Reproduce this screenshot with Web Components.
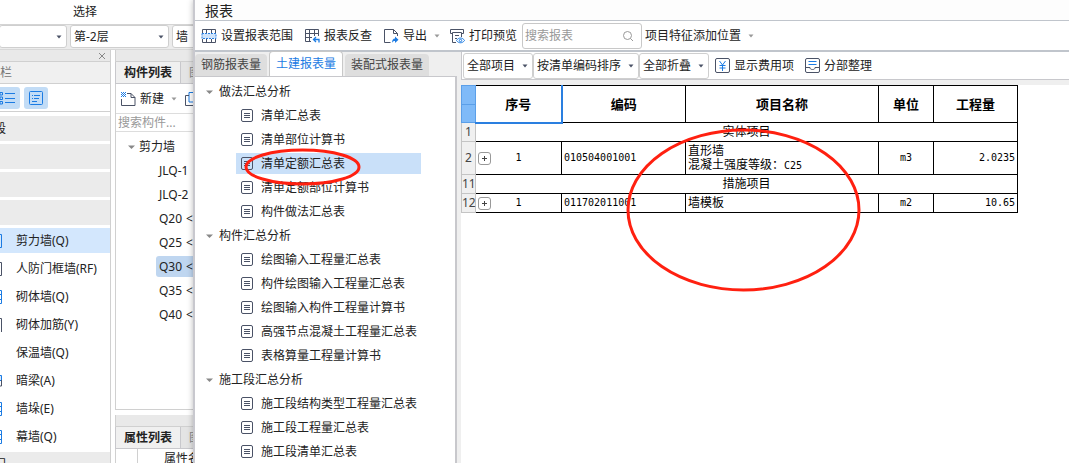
<!DOCTYPE html>
<html lang="zh-CN">
<head>
<meta charset="utf-8">
<title>报表</title>
<style>
html,body{height:100%;margin:0}
body{font:12px/16px "Noto Sans","Noto Sans CJK SC",sans-serif;color:#222;background:#fff;overflow:hidden}
</style>
</head>
<body>
<report-app></report-app>
<script>
const BASE = `*{box-sizing:border-box}button,input,select{font:inherit;color:inherit;margin:0}button{border:0;background:none;padding:0;white-space:nowrap}svg{display:block;flex:none}`;
function define(name, css, html) {
  customElements.define(name, class extends HTMLElement {
    connectedCallback() {
      if (this.shadowRoot) return;
      const body = typeof html === 'function' ? html(this) : html;
      this.attachShadow({mode: 'open'}).innerHTML = `<style>${BASE}${css}</style>${body}`;
    }
  });
}

const ICONS = {
  range: `<path d="M1.500 5V1.500h13V5M1.500 11v3.500h13V11M5.500 1.500V5M10.500 1.500V5M5.500 11v3.500M10.500 11v3.500" stroke="#4a5266"/><path d="M1 5.500h14v5H1z" fill="#cfe4fb" stroke="#2a7fe0" stroke-dasharray="2 1"/>`,
  check: `<path d="M7 13.500H1.500v-12h13V8M1.500 5.500h13M1.500 9.500H8M5.500 1.500v12M10.500 1.500V8" stroke="#4a5266"/><path d="M15 14.500v-3H9.500M12 9l-2.500 2.500L12 14" stroke="#1b7be3" stroke-width="1.300"/>`,
  export: `<path d="M7.500 14.500h-6v-13h9l4 4V8M10.500 1.500v4h4" stroke="#4a5266"/><path d="M9 15c0-3 1-4.500 3-4.500V8.500l3.500 3.200L12 15v-2c-1.500 0-2.300.500-3 2z" fill="#1b7be3"/>`,
  print: `<path d="M3.500 5.500h-2v-4h13v4h-2M3.500 4.500v10H7M3.500 4.500h9V9M6 7.500h4M6 10.500h2" stroke="#4a5266"/><path d="M7.500 12.500c2-3.300 6-3.300 8 0-2 3-6 3-8 0z" fill="#fff" stroke="#1b7be3"/><circle cx="11.500" cy="12.500" r="1.200" stroke="#1b7be3"/>`,
  search: `<circle cx="7.500" cy="7.500" r="4" stroke="#999"/><path d="M10.500 10.500 13 13" stroke="#999"/>`,
  fee: `<rect x=".5" y=".5" width="14" height="14" rx="1.500" stroke="#4a5266"/><path d="M4.500 3l3 4 3-4M7.500 7v6M4.500 7.500h6M4.500 10h6" stroke="#1b7be3"/>`,
  sort: `<rect x=".5" y=".5" width="14" height="14" rx="1.500" stroke="#4a5266"/><path d="M3.500 3.500h8M3.500 6.500h8" stroke="#1b7be3"/><path d="M.5 9.500H5c0 1.500 1 2 2.500 2s2.500-.5 2.500-2h4.500" stroke="#4a5266"/>`,
  doc: `<rect x="1.500" y="1.500" width="11" height="12" rx="1.500" stroke="#4a5266"/><path d="M4 5.500h6M4 7.500h6M4 9.500h6" stroke="#4a5266"/>`,
  fresh: `<path d="M7 2.500h4l4 4v8H1.500V8M11 2.500v4h4" stroke="#4a5266"/><path d="M1 1.500h5M1 3.500h5M1 5.500h5M2 2.500h4M2 4.500h4" stroke="#1b7be3" stroke-dasharray="1 1"/>`,
  copy: `<path d="M5 1.500h9.500v9.500H5z" stroke="#1b7be3"/><path d="M5 4.500H1.500v10h9V11" stroke="#4a5266"/>`,
  close: `<path d="M5 5l6 6M11 5l-6 6" stroke="#888"/>`,
  list: `<path d="M0 2.500h2.500v2.500H0zM0 7h2.500v2.500H0zM0 11.500h2.500V14H0zM5 3.500h10M5 8.500h10M5 12.500h10" stroke="#1b7be3"/>`,
  card: `<rect x="1.500" y="1.500" width="13" height="13" rx="1" stroke="#1b7be3"/><path d="M4 5.500h1M6 5.500h6M4 8.500h1M6 8.500h5M4 11.500h5" stroke="#1b7be3"/>`,
  down: `<path d="M5.500 6.500h5L8 9.500z" fill="#4a5266"/>`,
  fold: `<path d="M5 6.500h7L8.500 10z" fill="#888"/>`,
  more: `<path d="M5.500 6.500h5L8 9.500z" fill="#999"/>`
};
define('ui-icon', `:host{display:block;flex:none}`, el => {
  const s = el.getAttribute('size') || 16;
  return `<svg width="${s}" height="${s}" viewBox="0 0 ${s} ${s}" fill="none" aria-hidden="true">${ICONS[el.getAttribute('name')]}</svg>`;
});
define('tool-button', `:host{display:block;flex:none}button{display:flex;align-items:center;gap:4px;height:24px}`,
  el => `<button type="button"><ui-icon name="${el.getAttribute('icon')}" size="${el.getAttribute('size') || 16}"></ui-icon><slot></slot></button>`);
define('drop-select', `:host{display:grid;flex:none;height:26px}
  select,ui-icon{grid-area:1/1}select{appearance:none;width:100%;height:100%;border:1px solid #cfcfcf;border-radius:3px;background:#fff;padding:0 16px 0 3px;outline:0}
  :host([plain]) select{border-color:transparent;background:none;padding-left:2px}
  ui-icon{justify-self:end;align-self:center;pointer-events:none}`,
  el => `<select aria-label="${el.getAttribute('label')}"><option>${el.getAttribute('value')}</option></select><ui-icon name="${el.hasAttribute('plain') ? 'more' : 'down'}"></ui-icon>`);

/* main window behind the report */
define('floor-bar', `:host{display:block}
  header{height:24px;padding:4px 0 0 73px}
  .bar{display:flex;gap:3px;height:26px;background:#ececec;border-top:1px solid #d4d4d4;border-bottom:1px solid #d8d8d8}
  drop-select{height:23px}.a{width:68px;margin-left:-1px}.b{width:99px}.c{width:90px}`,
  `<header>选择</header><div class="bar"><drop-select class="a" label="工程" value=""></drop-select><drop-select class="b" label="楼层" value="第-2层"></drop-select><drop-select class="c" label="类型" value="墙"></drop-select></div>`);

const wallIcon = k => ({
  q: '<path d="M0 1.500h1.500v13H0" stroke="#1b7be3" fill="#d5e8fc"/>',
  d: '<path d="M0 1.500h1.500v13H0" stroke="#4a5266"/>',
  g: '<path d="M0 1.500h1.500v13H0M0 5.500h2M0 10.500h2" stroke="#1b7be3"/>',
  h: '<path d="M0 1.500h1.500V15" stroke="#4a5266"/>',
  n: '',
  s: '<path d="M0 2.500h1.500v5H0" stroke="#1b7be3" fill="#d5e8fc"/><path d="M1.500 7v6H0" stroke="#4a5266"/>'
}[k]);
define('side-item', `:host{display:block}button{display:flex;align-items:center;gap:13px;width:100%;height:25px}
  :host([selected]) button{background:#d3e7fd}`,
  el => `<button type="button"><svg width="3" height="16" viewBox="0 0 3 16" fill="none">${wallIcon(el.getAttribute('kind'))}</svg><slot></slot></button>`);
define('side-section', `:host{display:block;flex:none;height:25px;background:#ebebeb;padding-top:5px;text-indent:-6px;overflow:hidden}`, `<slot></slot>`);
define('nav-panel', `:host{display:flex;flex-direction:column;width:111px;flex:none;border-right:1px solid #d0d0d0;overflow:hidden}
  .strip{display:flex;justify-content:flex-end;height:12px;background:#e9e9e9;border-bottom:1px solid #d0d0d0;flex:none}
  .strip button{display:flex;align-items:center}
  .name{height:22px;padding-top:3px;background:#f0f0f0;border-bottom:1px solid #d0d0d0;color:#777;flex:none}
  .tools{display:flex;gap:4px;height:28px;padding-top:3px;border-bottom:1px solid #d0d0d0;flex:none}
  .tools button{display:grid;place-items:center;width:24px;height:22px;background:#c2dcf6;border-radius:3px}
  .tools button:first-child{width:20px;border-radius:0 3px 3px 0;justify-content:start}
  .list{display:flex;flex-direction:column;gap:3px;padding-top:4px}`,
  `<div class="strip"><button type="button" aria-label="关闭"><ui-icon name="close"></ui-icon></button></div>
   <div class="name">栏</div>
   <div class="tools"><button type="button" aria-label="列表"><ui-icon name="list"></ui-icon></button><button type="button" aria-label="卡片"><ui-icon name="card"></ui-icon></button></div>
   <div class="list"><side-section>段</side-section><side-section></side-section><side-section></side-section><side-section></side-section>
   <side-item kind="q" selected>剪力墙(Q)</side-item><side-item kind="d">人防门框墙(RF)</side-item><side-item kind="g">砌体墙(Q)</side-item><side-item kind="h">砌体加筋(Y)</side-item><side-item kind="n">保温墙(Q)</side-item><side-item kind="s">暗梁(A)</side-item><side-item kind="g">墙垛(E)</side-item><side-item kind="g">幕墙(Q)</side-item><side-section>门</side-section></div>`);

define('panel-tabs', `:host{display:block;flex:none}.strip{height:12px;background:#e9e9e9;border:solid #d0d0d0;border-width:0 0 1px 1px}
  .tabs{display:flex;height:22px;border:solid #c8c8cc;border-width:0 0 1px 1px}
  button{background:#e4e4e4;color:#888;padding:0 8px;border-right:1px solid #c8c8cc}button:first-child{background:#f0f0f0;color:#222;font-weight:700}`,
  el => `<div class="strip"></div><div class="tabs"><button type="button">${el.getAttribute('label')}</button><button type="button">图</button></div>`);
define('component-panel', `:host{display:flex;flex-direction:column;flex:1;min-width:0;overflow:hidden;white-space:nowrap}
  .box{height:326px;flex:none;border:solid #d0d0d0;border-width:0 0 1px 1px;margin-bottom:5px}
  .tools{display:flex;gap:2px;height:29px;align-items:center;padding-left:4px}
  input{display:block;width:100%;height:19px;border:solid #ddd;border-width:1px 0;padding:0 2px;outline:0;background:#fff}input::placeholder{color:#999;opacity:1}
  ul{list-style:none;margin:0;padding:3px 0 0}
  .root{display:flex;align-items:center;height:24px;padding-left:7px}
  .leaf{display:flex;align-items:center;gap:4px;height:21px;margin:0 0 3px 40px;padding-left:3px;border-radius:3px 0 0 3px}
  .leaf[aria-selected]{background:#bfd6f0}.first{margin-top:1px}
  .prop{display:flex;flex:1;border-left:1px solid #d0d0d0}.prop i{flex:none;width:22px;border-right:1px solid #d0d0d0}.prop span{padding:2px 0 0 26px}`,
  `<panel-tabs label="构件列表"></panel-tabs>
   <div class="box"><div class="tools"><tool-button icon="fresh">新建</tool-button><ui-icon name="more"></ui-icon><ui-icon name="copy"></ui-icon></div>
   <input aria-label="搜索构件" placeholder="搜索构件...">
   <ul><li class="root"><ui-icon name="fold"></ui-icon>剪力墙</li>
   <li class="leaf first">JLQ-1</li><li class="leaf">JLQ-2</li><li class="leaf">Q20 <span>&lt;</span></li><li class="leaf">Q25 <span>&lt;</span></li><li class="leaf" aria-selected="true">Q30 <span>&lt;</span></li><li class="leaf">Q35 <span>&lt;</span></li><li class="leaf">Q40 <span>&lt;</span></li></ul></div>
   <panel-tabs label="属性列表"></panel-tabs><div class="prop"><i></i><span>属性名</span></div>`);
define('main-window', `:host{display:flex;flex-direction:column;width:193px;flex:none;overflow:hidden}.body{display:flex;flex:1;gap:4px;min-height:0}`,
  `<floor-bar></floor-bar><div class="body"><nav-panel></nav-panel><component-panel></component-panel></div>`);

/* report window */
define('report-toolbar', `:host{display:flex;align-items:center;height:32px;border:solid #c0c5cc;border-width:1px 0 2px;padding-left:6px;flex:none;white-space:nowrap}
  tool-button{margin-right:11px}.ex{margin-right:2px}.pr{margin-right:5px}.arrow{margin-right:4px}
  label{display:flex;align-items:center;width:120px;height:26px;border:1px solid #c8c8c8;border-radius:3px;padding:0 5px 0 2px}
  input{flex:1;min-width:0;border:0;outline:0;padding:0;background:none}input::placeholder{color:#999;opacity:1}`,
  `<tool-button icon="range">设置报表范围</tool-button><tool-button icon="check">报表反查</tool-button><tool-button class="ex" icon="export">导出</tool-button><ui-icon class="arrow" name="more"></ui-icon><tool-button class="pr" icon="print">打印预览</tool-button>
   <label><input aria-label="搜索报表" placeholder="搜索报表"><ui-icon name="search"></ui-icon></label><drop-select plain label="位置" value="项目特征添加位置"></drop-select>`);
define('report-tabs', `:host{display:flex;align-items:flex-end;gap:2px;height:24px;flex:none}
  button{height:22px;padding:0 6px;background:#dedede;color:#444;border-radius:4px 4px 0 0}
  .on{height:25px;background:#fff;color:#1b7be3;border:1px solid #c8c8c8;border-bottom:0}`,
  `<button type="button">钢筋报表量</button><button type="button" class="on">土建报表量</button><button type="button">装配式报表量</button>`);
define('tree-group', `:host{display:block}.h{display:flex;align-items:center;height:24px;padding-left:6px;gap:2px}`,
  el => `<div class="h"><ui-icon name="fold"></ui-icon>${el.getAttribute('label')}</div><slot></slot>`);
define('tree-item', `:host{display:block;padding:1px 34px 2px 41px}button{display:flex;align-items:center;gap:6px;width:100%;height:21px;padding-left:4px}
  :host([selected]) button{background:#c9e0f9}`,
  `<button type="button"><ui-icon name="doc" size="15"></ui-icon><slot></slot></button>`);
const GROUPS = [
  ['做法汇总分析', ['清单汇总表','清单部位计算书','清单定额汇总表','清单定额部位计算书','构件做法汇总表']],
  ['构件汇总分析', ['绘图输入工程量汇总表','构件绘图输入工程量汇总表','绘图输入构件工程量计算书','高强节点混凝土工程量汇总表','表格算量工程量计算书']],
  ['施工段汇总分析', ['施工段结构类型工程量汇总表','施工段工程量汇总表','施工段清单汇总表']]
];
define('report-tree', `:host{display:flex;flex-direction:column;width:262px;flex:none;background:#efefef}
  .tree{flex:1;background:#fff;border:solid #c8c8cc;border-width:1px 2px 0 0;padding-top:3px;min-height:0;overflow:hidden}`,
  `<report-tabs></report-tabs><div class="tree">${GROUPS.map(([g, items]) =>
    `<tree-group label="${g}">${items.map(t => `<tree-item${t === '清单定额汇总表' ? ' selected' : ''}>${t}</tree-item>`).join('')}</tree-group>`).join('')}</div>`);
define('filter-bar', `:host{display:flex;align-items:center;height:28px;background:#fff;border:solid #c8c8cc;border-width:0 0 1px 1px;padding-left:1px;white-space:nowrap}
  tool-button{margin-left:6px}.s{margin-left:11px}`,
  `<drop-select label="项目" value="全部项目"></drop-select><drop-select label="排序" value="按清单编码排序"></drop-select><drop-select label="折叠" value="全部折叠"></drop-select><tool-button icon="fee" size="15">显示费用项</tool-button><tool-button class="s" icon="sort" size="15">分部整理</tool-button>`);
define('quantity-table', `:host{display:block;color:#000}
  table{border-collapse:collapse;table-layout:fixed;width:557px;line-height:14px}
  td,thead th{border:1px solid #000;padding:0 2px;text-align:left;overflow:hidden}
  thead th{height:37px;font-size:13px;text-align:center}
  tbody th{height:19px;font-weight:400;color:#444;background:#f0f0f0;border:1px solid #c4c4c4;padding:0;text-align:center}
  thead .corner{background:linear-gradient(#5b9fe8,#5b9fe8) 0 18px/100% 1px no-repeat #7fbaf8;border-color:#5b9fe8}
  thead .sel{border-right:2px solid #2a7fe0;border-bottom:2px solid #2a7fe0}
  .m{font:10px/14px "DejaVu Sans Mono",monospace}
  .c{text-align:center}.r{text-align:right}tbody .tall{height:33px}
  .no{display:grid;grid-template-columns:13px 1fr 13px;align-items:center;text-align:center}
  button{width:13px;height:13px;border:1px solid #999;border-radius:3px;background:#fff;display:grid;place-items:center}`,
  () => {
    const no = `<div class="no"><button type="button" aria-label="展开"><svg width="5" height="5" viewBox="0 0 5 5"><path d="M0 2.500h5M2.500 0v5" stroke="#444"/></svg></button><span class="m">1</span></div>`;
    return `<table><colgroup><col style="width:14px"><col style="width:86px"><col style="width:124px"><col style="width:193px"><col style="width:55px"><col style="width:84px"></colgroup>
    <thead><tr><th class="corner"></th><th class="sel">序号</th><th>编码</th><th>项目名称</th><th>单位</th><th>工程量</th></tr></thead>
    <tbody><tr><th>1</th><td class="c" colspan="5">实体项目</td></tr>
    <tr><th class="tall">2</th><td>${no}</td><td class="m">010504001001</td><td>直形墙<br>混凝土强度等级：<span class="m">C25</span></td><td class="m c">m3</td><td class="m r">2.0235</td></tr>
    <tr><th>11</th><td class="c" colspan="5">措施项目</td></tr>
    <tr><th>12</th><td>${no}</td><td class="m">011702011001</td><td>墙模板</td><td class="m c">m2</td><td class="m r">10.65</td></tr></tbody></table>`;
  });
define('report-window', `:host{display:flex;flex-direction:column;flex:1;min-width:0;background:#fff;border-left:2px solid #c8c8ce;box-shadow:0 0 6px #0004;position:relative}
  header{height:20px;flex:none;padding:2px 0 0 10px;font-size:14px;line-height:18px;background:#fdfdfd}
  .body{display:flex;flex:1;min-height:0;background:#efefef;gap:4px}
  main{flex:1;min-width:0;display:flex;flex-direction:column;gap:5px}
  .sheet{flex:1;background:#fff}`,
  `<header>报表</header><report-toolbar></report-toolbar><div class="body"><report-tree></report-tree><main><filter-bar></filter-bar><div class="sheet"><quantity-table></quantity-table></div></main></div>`);
/* hand-drawn red marks laid over the windows */
define('mark-ring', `:host{position:absolute;pointer-events:none}svg{width:100%;height:100%;overflow:visible}`,
  `<svg aria-hidden="true"><ellipse cx="50%" cy="50%" rx="50%" ry="50%" fill="none" stroke="#ff2010" stroke-width="3"/></svg>`);
define('report-app', `:host{display:flex;height:100%;position:relative;overflow:hidden}
  .small{left:246px;top:150px;width:113px;height:34px}.large{left:628px;top:130px;width:231px;height:160px}`,
  `<main-window></main-window><report-window></report-window><mark-ring class="small"></mark-ring><mark-ring class="large"></mark-ring>`);
</script>
</body>
</html>
